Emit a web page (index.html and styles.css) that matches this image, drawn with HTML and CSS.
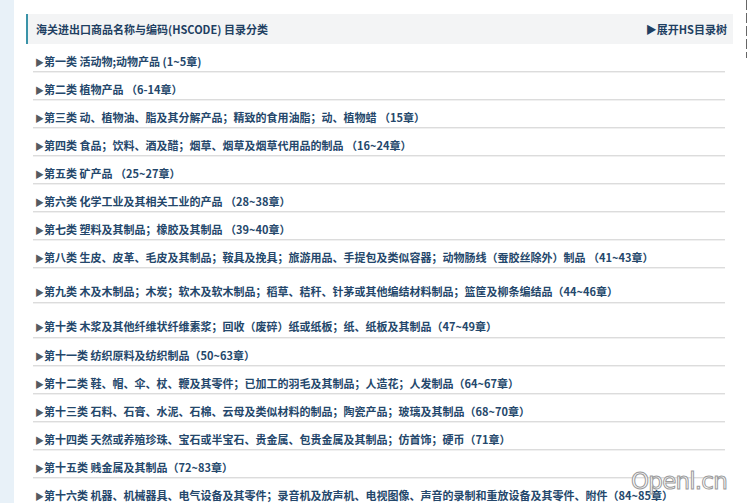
FILE: index.html
```html
<!DOCTYPE html>
<html lang="zh-CN">
<head>
<meta charset="utf-8">
<title>HSCODE 目录分类</title>
<link rel="stylesheet" href="styles.css">
</head>
<body>
<div class="page">
  <div class="side-strip"></div>
  <main class="main">
    <div class="header">
      <span class="title">海关进出口商品名称与编码(HSCODE) 目录分类</span>
      <a class="expand">▶展开HS目录树</a>
    </div>
    <ul class="list">
      <li class="row"><span class="tri">▶</span>第一类 活动物;动物产品 (1~5章)</li>
      <li class="row"><span class="tri">▶</span>第二类 植物产品 （6-14章）</li>
      <li class="row"><span class="tri">▶</span>第三类 动、植物油、脂及其分解产品；精致的食用油脂；动、植物蜡 （15章）</li>
      <li class="row"><span class="tri">▶</span>第四类 食品；饮料、酒及醋；烟草、烟草及烟草代用品的制品 （16~24章）</li>
      <li class="row"><span class="tri">▶</span>第五类 矿产品 （25~27章）</li>
      <li class="row"><span class="tri">▶</span>第六类 化学工业及其相关工业的产品 （28~38章）</li>
      <li class="row"><span class="tri">▶</span>第七类 塑料及其制品；橡胶及其制品 （39~40章）</li>
      <li class="row"><span class="tri">▶</span>第八类 生皮、皮革、毛皮及其制品；鞍具及挽具；旅游用品、手提包及类似容器；动物肠线（蚕胶丝除外）制品 （41~43章）</li>
      <li class="row tall"><span class="tri">▶</span>第九类 木及木制品；木炭；软木及软木制品；稻草、秸秆、针茅或其他编结材料制品；篮筐及柳条编结品（44~46章）</li>
      <li class="row tall"><span class="tri">▶</span>第十类 木浆及其他纤维状纤维素浆；回收（废碎）纸或纸板；纸、纸板及其制品（47~49章）</li>
      <li class="row"><span class="tri">▶</span>第十一类 纺织原料及纺织制品（50~63章）</li>
      <li class="row"><span class="tri">▶</span>第十二类 鞋、帽、伞、杖、鞭及其零件；已加工的羽毛及其制品；人造花；人发制品（64~67章）</li>
      <li class="row"><span class="tri">▶</span>第十三类 石料、石膏、水泥、石棉、云母及类似材料的制品；陶瓷产品；玻璃及其制品（68~70章）</li>
      <li class="row"><span class="tri">▶</span>第十四类 天然或养殖珍珠、宝石或半宝石、贵金属、包贵金属及其制品；仿首饰；硬币（71章）</li>
      <li class="row"><span class="tri">▶</span>第十五类 贱金属及其制品（72~83章）</li>
      <li class="row"><span class="tri">▶</span>第十六类 机器、机械器具、电气设备及其零件；录音机及放声机、电视图像、声音的录制和重放设备及其零件、附件（84~85章）</li>
    </ul>
    <div class="watermark">Openl.cn</div>
  </main>
  <div class="right-col"><div class="edge"></div></div>
</div>
</body>
</html>
```
FILE: styles.css
```css
html, body {
  margin: 0;
  padding: 0;
  background: #ffffff;
  overflow: hidden;
}
body {
  font-family: "Noto Sans CJK SC", "Noto Sans", sans-serif;
  font-weight: 700;
  font-size: 11px;
  color: #24476b;
}
.page {
  display: flex;
  height: 503px;
}
.side-strip {
  width: 14px;
  flex: none;
  background: #e8f1f8;
}
.main {
  position: relative;
  width: 719px;
  flex: none;
  padding: 14px 0 0 12px;
  box-sizing: border-box;
}
.header {
  display: flex;
  justify-content: space-between;
  align-items: center;
  height: 30px;
  width: 707px;
  box-sizing: border-box;
  background: #f3f4f5;
  border-left: 2px solid #3a93a8;
  padding: 0 6px 0 8px;
}
.title {
  color: #1f3f62;
  font-size: 11px;
}
.expand {
  color: #1f3f62;
  font-size: 11px;
}
.list {
  list-style: none;
  margin: 0 0 0 7px;
  padding: 0;
  width: 692px;
}
.row {
  box-sizing: border-box;
  height: 28px;
  padding: 10px 0 0 2px;
  line-height: 14px;
  border-bottom: 1px solid #dcdcdc;
  box-shadow: 0 1px 0 #f0f0f0;
  white-space: nowrap;
}
.row.tall {
  height: 35px;
  padding-top: 16px;
}
.tri {
  color: #555a60;
  font-size: 9px;
  margin-right: 0;
}
.watermark {
  position: absolute;
  right: 6px;
  top: 468px;
  font-family: "DejaVu Sans", sans-serif;
  font-weight: 400;
  font-size: 23px;
  letter-spacing: -0.8px;
  color: #ffffff;
  -webkit-text-stroke: 1px #9a9a9a;
}
.right-col {
  flex: 1;
  background: #ffffff;
  position: relative;
}
.edge {
  margin: 0 0 0 13px;
  width: 1px;
  height: 58px;
  background: repeating-linear-gradient(#666 0 10px, #fff 10px 13px);
}
```
